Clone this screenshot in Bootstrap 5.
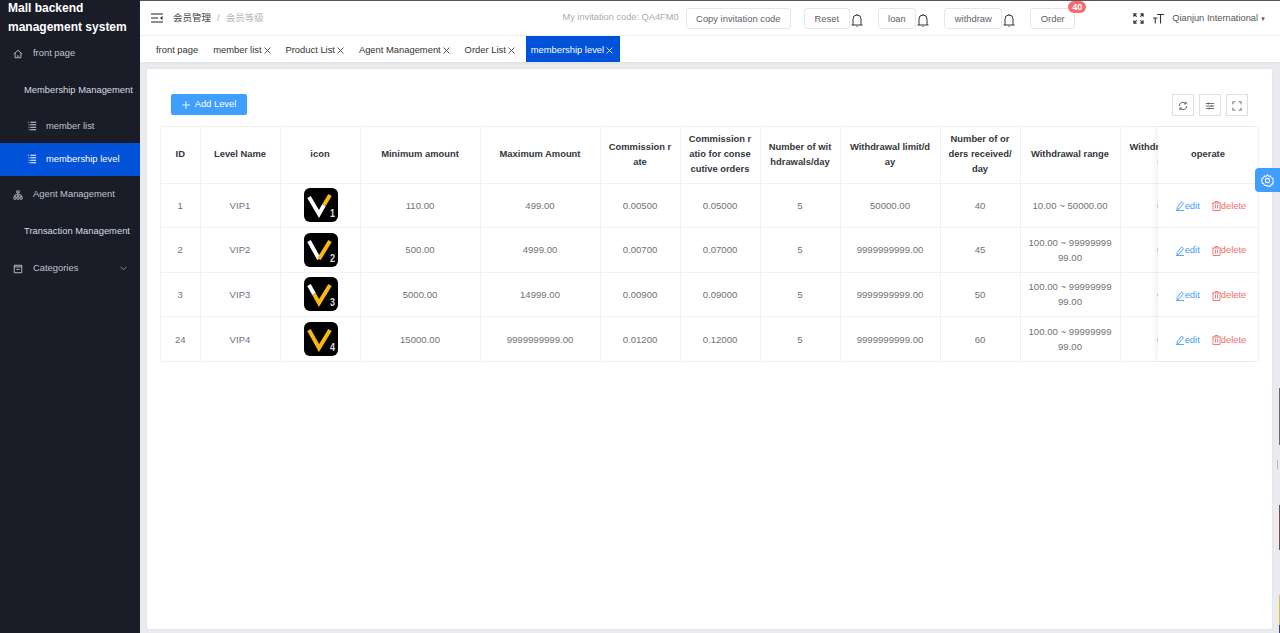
<!DOCTYPE html>
<html lang="en">
<head>
<meta charset="UTF-8">
<title>Mall backend management system</title>
<link href="https://cdn.jsdelivr.net/npm/bootstrap@5.3.0/dist/css/bootstrap.min.css" rel="stylesheet">
<style>
html, body { height: 100%; overflow: hidden; }
body { font-family: "Liberation Sans", "Noto Sans CJK SC", Arial, sans-serif; font-size: 9.4px; color: #606266; background: #e9ebee; }
.shell { height: 633px; }
.side { width: 140px; background: #1a1c28; color: #bfc5ce; flex: none; }
.side-logo { height: 36px; padding: 0 0 0 8px; font-size: 12px; line-height: 19px; font-weight: 700; color: #fff; margin-top: -1px; white-space: nowrap; }
.side-item { height: 37px; padding-left: 13px; gap: 10px; white-space: nowrap; }
.side-item svg { flex: none; }
.side-plain { padding-left: 24px; color: #d5dce4; }
.side-sub { height: 33.5px; padding-left: 27px; gap: 9px; }
.side-active { background: #0052d9; color: #fff; }
.side-chev { margin-left: auto; margin-right: 13px; }
.main-area { min-width: 0; }
.topbar { height: 36px; background: #fff; border-top: 1px solid #555; padding: 0 14px 0 11px; border-bottom: 1px solid #f2f2f2; }
.crumb { margin-left: 10px; font-size: 9.5px; color: #444; }
.crumb i { font-style: normal; color: #aaa; margin: 0 6px; }
.crumb span { color: #b4b4b4; }
.invite { color: #a8abb2; margin-left: auto; margin-right: 7px; font-size: 9.25px; }
.tbtn { height: 21px; padding: 0 9.5px; font-size: 9.4px; line-height: 19px; color: #606266; background: #fff; border: 1px solid #e4e7ed; border-radius: 3px; white-space: nowrap; }
.copy-btn { margin-right: 13px; }
.tbell { margin: 4px 14px 0 0; flex: none; }
.order-wrap { margin-right: 58px; }
.order-badge { position: absolute; top: -7px; right: -11px; background: #f56c6c; color: #fff; border-radius: 7px; font-size: 9px; line-height: 12px; padding: 0 4px; border: 0; }
.size-ico { margin-left: 9px; }
.user-name { font-size: 9.3px; color: #555; margin-left: 8px; margin-top: 1px; white-space: nowrap; }
.caret-mark { font-size: 6px; margin-left: 2px; }
.tabbar { height: 26px; background: #fff; padding-left: 16px; box-shadow: 0 1px 3px rgba(0,0,0,.05); }
.tab-link { font-size: 9.4px; color: #333; white-space: nowrap; height: 26px; line-height: 27px; margin-right: 14.9px; }
.tab-link svg { margin-left: 2px; }
.tab-on { background: #0052d9; color: #fff; padding: 0 7px 0 5px; margin: 0 0 0 -4px; }
.page-body { padding: 7px 8px 4px 7px; height: 571px; }
.sheet { background: #fff; height: 560px; border-radius: 2px; padding: 25px 13px 0 13px; box-shadow: 0 0 3px rgba(0,0,0,.06); }
.tools { height: 32px; padding: 0 11px 0 11px; }
.add-btn { width: 76px; height: 21px; padding: 0; font-size: 9.4px; background: #409eff; color: #fff; border: 0; border-radius: 2px; margin-right: auto; gap: 5px; }
.tool-ico { width: 22px; height: 22px; border: 1px solid #dcdfe6; border-radius: 0; background: #fff; padding: 0; margin-left: 5px; line-height: 18px; }
.grid-wrap { border: 1px solid #eef0f5; width: 1099px; border-radius: 2px; }
.grid-scroll { width: 997px; overflow: hidden; flex: none; }
.grid-fixed { flex: 1; box-shadow: -3px 0 4px rgba(0,0,0,.05); position: relative; }
.lvl-table { table-layout: fixed; margin: 0; border-collapse: collapse; color: #606266; font-size: 9.6px; }
.lvl-table th, .lvl-table td { border: 0; border-right: 1px solid #f0f1f6; border-bottom: 1px solid #f0f1f6; padding: 0 8px; text-align: center; vertical-align: middle; word-break: break-all; line-height: 15px; background: #fff; color: #6f7278; box-shadow: none; }
.lvl-table th { height: 56px; padding: 0 7.5px 2px; color: #33363c; font-weight: 700; font-size: 9.4px; line-height: 15.2px; }
.lvl-table td { height: 44.6px; }
.lvl-table td.ico-cell { padding-left: 10px; }
.lvl-table tr:last-child td { border-bottom: 0; }
.grid-fixed .lvl-table th, .grid-fixed .lvl-table td { border-right: 0; padding: 0; }
.grid-fixed .lvl-table td { padding-left: 6px; }
.grid-fixed .lvl-table th { padding-bottom: 2px; }
.vip-ico { display: block; margin: 0 auto; }
.act-link { font-size: 9.4px; white-space: nowrap; }
.act-edit { color: #409eff; margin-right: 12px; }
.act-del { color: #f56c6c; }
.float-gear { position: absolute; right: 0; top: 168px; width: 25px; height: 24px; background: #409eff; border-radius: 4px 0 0 4px; }
.edge-mark { position: absolute; right: 0; width: 1px; }
.edge-a { top: 388px; height: 57px; background: #6a6a6a; }
.edge-b { top: 505px; height: 45px; background: #7a4a55; }
.edge-c { top: 595px; height: 30px; background: #dcc044; }
.edge-d { top: 625px; height: 8px; background: #3d3f99; }
.edge-dots { position: absolute; right: 2px; top: 460px; width: 1px; height: 9px; background: #b5b5b5; }
</style>
</head>
<body>
<div class="d-flex shell position-relative">
  <!-- sidebar -->
  <aside class="side">
    <div class="side-logo">Mall backend<br>management system</div>
    <div class="side-item d-flex align-items-center">
      <svg width="10" height="10" viewBox="0 0 12 12" fill="none" stroke="#bfc5ce" stroke-width="1.1"><path d="M1 6 6 1.5 11 6M2.5 5v5.5h7V5"/><path d="M4.5 8.5h3"/></svg>
      <span>front page</span>
    </div>
    <div class="side-item side-plain d-flex align-items-center">Membership Management</div>
    <div class="side-item side-sub d-flex align-items-center">
      <svg width="10" height="10" viewBox="0 0 12 12" stroke="#d5dce4" stroke-width="1.2"><path d="M1 1.5h1M4 1.5h7M4 4.5h7M4 7.5h7M4 10.5h7M2 4.5h1M2 7.5h1M2 10.5h1"/></svg>
      <span>member list</span>
    </div>
    <div class="side-item side-sub side-active d-flex align-items-center">
      <svg width="10" height="10" viewBox="0 0 12 12" stroke="#fff" stroke-width="1.2"><path d="M1 1.5h1M4 1.5h7M4 4.5h7M4 7.5h7M4 10.5h7M2 4.5h1M2 7.5h1M2 10.5h1"/></svg>
      <span>membership level</span>
    </div>
    <div class="side-item d-flex align-items-center">
      <svg width="10" height="10" viewBox="0 0 12 12" fill="none" stroke="#bfc5ce" stroke-width="1"><path d="M4.5 1h3v2.5h-3zM1 8h2.5v3H1zM4.75 8h2.5v3h-2.5zM8.5 8H11v3H8.500zM6 3.500V8M2.200 8V5.800h7.600V8"/></svg>
      <span>Agent Management</span>
    </div>
    <div class="side-item side-plain d-flex align-items-center">Transaction Management</div>
    <div class="side-item d-flex align-items-center">
      <svg width="10" height="10" viewBox="0 0 12 12" fill="none" stroke="#bfc5ce" stroke-width="1.1"><path d="M1.500 1.500h9v9h-9zM1.500 3.500h9M4 6.500h4"/></svg>
      <span>Categories</span>
      <svg class="side-chev" width="7" height="5" viewBox="0 0 8 5" fill="none" stroke="#8f95a0" stroke-width="1"><path d="M.5.500 4 4 7.500.500"/></svg>
    </div>
  </aside>

  <div class="main-area flex-grow-1">
    <!-- top bar -->
    <div class="topbar d-flex align-items-center">
      <svg width="12" height="10" viewBox="0 0 12 10" stroke="#222" stroke-width="1.200" fill="#222"><path d="M0 1h12M0 5h7M0 9h12" fill="none"/><path d="M11.500 3v4L9 5z" stroke="none"/></svg>
      <div class="crumb">会员管理<i>/</i><span>会员等级</span></div>
      <div class="invite">My invitation code: QA4FM0</div>
      <button class="btn tbtn copy-btn" type="button">Copy invitation code</button>
      <button class="btn tbtn" type="button">Reset</button>
      <svg class="tbell" width="14" height="14" viewBox="0 0 14 14" fill="none" stroke="#333" stroke-width="1"><path d="M1.500 12h11M3 12V6a4 4 0 0 1 8 0v6M7 1v1M6.500 13.500h1"/></svg>
      <button class="btn tbtn" type="button">loan</button>
      <svg class="tbell" width="14" height="14" viewBox="0 0 14 14" fill="none" stroke="#333" stroke-width="1"><path d="M1.500 12h11M3 12V6a4 4 0 0 1 8 0v6M7 1v1M6.500 13.500h1"/></svg>
      <button class="btn tbtn" type="button">withdraw</button>
      <svg class="tbell" width="14" height="14" viewBox="0 0 14 14" fill="none" stroke="#333" stroke-width="1"><path d="M1.500 12h11M3 12V6a4 4 0 0 1 8 0v6M7 1v1M6.500 13.500h1"/></svg>
      <div class="position-relative order-wrap">
        <button class="btn tbtn" type="button">Order</button>
        <span class="badge order-badge">40</span>
      </div>
      <svg width="11" height="11" viewBox="0 0 12 12" fill="none" stroke="#333" stroke-width="1.300"><path d="M1 1l3 3M1 4V1h3M11 1L8 4M8 1h3v3M1 11l3-3M1 8v3h3M11 11L8 8M8 11h3V8"/></svg>
      <svg class="size-ico" width="11" height="11" viewBox="0 0 11 11" fill="none" stroke="#333" stroke-width="1.100"><path d="M4 1.500h7M7.500 1.500V10.500M0 5h4.500M2.200 5v5.500"/></svg>
      <div class="user-name">Qianjun International<span class="caret-mark">▼</span></div>
    </div>

    <!-- tabs -->
    <div class="tabbar d-flex">
      <span class="tab-link">front page</span>
      <span class="tab-link">member list<svg width="7" height="7" viewBox="0 0 7 7" stroke="#444" stroke-width=".9"><path d="M.5.500l6 6M6.500.500l-6 6"/></svg></span>
      <span class="tab-link">Product List<svg width="7" height="7" viewBox="0 0 7 7" stroke="#444" stroke-width=".9"><path d="M.5.500l6 6M6.500.500l-6 6"/></svg></span>
      <span class="tab-link">Agent Management<svg width="7" height="7" viewBox="0 0 7 7" stroke="#444" stroke-width=".9"><path d="M.5.500l6 6M6.500.500l-6 6"/></svg></span>
      <span class="tab-link">Order List<svg width="7" height="7" viewBox="0 0 7 7" stroke="#444" stroke-width=".9"><path d="M.5.500l6 6M6.500.500l-6 6"/></svg></span>
      <span class="tab-link tab-on">membership level<svg width="7" height="7" viewBox="0 0 7 7" stroke="#dfe8fa" stroke-width=".9"><path d="M.5.500l6 6M6.500.500l-6 6"/></svg></span>
    </div>

    <div class="page-body">
      <div class="sheet">
        <div class="tools d-flex align-items-start">
          <button class="btn add-btn d-flex align-items-center justify-content-center" type="button"><svg width="8" height="8" viewBox="0 0 8 8" stroke="#fff" stroke-width=".9"><path d="M4 0v8M0 4h8"/></svg>Add Level</button>
          <button class="btn tool-ico" type="button"><svg width="10" height="10" viewBox="0 0 12 12" fill="none" stroke="#555" stroke-width="1.100"><path d="M1.500 6a4.500 4.500 0 0 1 8-2.800M10.500 6a4.500 4.500 0 0 1-8 2.800M9.800 1v2.500H7.300M2.200 11V8.500h2.500"/></svg></button>
          <button class="btn tool-ico" type="button"><svg width="10" height="10" viewBox="0 0 12 12" fill="none" stroke="#555" stroke-width="1"><path d="M1 3h10M1 6h10M1 9h10M4 1.800v2.400M8 4.800v2.400M5 7.800v2.400"/></svg></button>
          <button class="btn tool-ico" type="button"><svg width="10" height="10" viewBox="0 0 12 12" fill="none" stroke="#555" stroke-width="1"><path d="M1 4V1h3M8 1h3v3M1 8v3h3M11 8v3H8"/></svg></button>
        </div>

        <div class="grid-wrap d-flex">
          <div class="grid-scroll">
            <table class="table lvl-table" style="width:1039px">
              <colgroup>
                <col style="width:39px"><col style="width:80px"><col style="width:80px"><col style="width:120px"><col style="width:120px"><col style="width:80px"><col style="width:80px"><col style="width:80px"><col style="width:100px"><col style="width:80px"><col style="width:100px"><col style="width:80px">
              </colgroup>
              <thead>
                <tr><th>ID</th><th>Level Name</th><th>icon</th><th>Minimum amount</th><th>Maximum Amount</th><th>Commission rate</th><th>Commission ratio for consecutive orders</th><th>Number of withdrawals/day</th><th>Withdrawal limit/day</th><th>Number of orders received/day</th><th>Withdrawal range</th><th>Withdrawal fee</th></tr>
              </thead>
              <tbody>
                <tr>
                  <td>1</td><td>VIP1</td>
                  <td class="ico-cell"><svg class="vip-ico" width="34" height="34" viewBox="0 0 34 34"><rect width="34" height="34" rx="6" fill="#000"/><g fill="none" stroke-width="4"><path d="M5 9 15 26 20 17" stroke="#fff"/><path d="M20 17 26 7" stroke="#f5b90f"/></g><text x="26" y="29" font-size="11" font-weight="700" fill="#ddd" font-family="Liberation Sans, sans-serif" textLength="5" lengthAdjust="spacingAndGlyphs">1</text></svg></td>
                  <td>110.00</td><td>499.00</td><td>0.00500</td><td>0.05000</td><td>5</td><td>50000.00</td><td>40</td><td>10.00 ~ 50000.00</td><td>0</td>
                </tr>
                <tr>
                  <td>2</td><td>VIP2</td>
                  <td class="ico-cell"><svg class="vip-ico" width="34" height="34" viewBox="0 0 34 34"><rect width="34" height="34" rx="6" fill="#000"/><g fill="none" stroke-width="4"><path d="M5 8 15 26" stroke="#fff"/><path d="M15 26 26 8" stroke="#f5b90f"/></g><text x="26" y="29" font-size="11" font-weight="700" fill="#ddd" font-family="Liberation Sans, sans-serif" textLength="5" lengthAdjust="spacingAndGlyphs">2</text></svg></td>
                  <td>500.00</td><td>4999.00</td><td>0.00700</td><td>0.07000</td><td>5</td><td>9999999999.00</td><td>45</td><td>100.00 ~ 9999999999.00</td><td>0</td>
                </tr>
                <tr>
                  <td>3</td><td>VIP3</td>
                  <td class="ico-cell"><svg class="vip-ico" width="34" height="34" viewBox="0 0 34 34"><rect width="34" height="34" rx="6" fill="#000"/><g fill="none" stroke-width="4"><path d="M5 8 10 17" stroke="#fff"/><path d="M10 17 15 26 26 8" stroke="#f5b90f"/></g><text x="26" y="29" font-size="11" font-weight="700" fill="#ddd" font-family="Liberation Sans, sans-serif" textLength="5" lengthAdjust="spacingAndGlyphs">3</text></svg></td>
                  <td>5000.00</td><td>14999.00</td><td>0.00900</td><td>0.09000</td><td>5</td><td>9999999999.00</td><td>50</td><td>100.00 ~ 9999999999.00</td><td>0</td>
                </tr>
                <tr>
                  <td>24</td><td>VIP4</td>
                  <td class="ico-cell"><svg class="vip-ico" width="34" height="34" viewBox="0 0 34 34"><rect width="34" height="34" rx="6" fill="#000"/><path d="M5 8 15 26 26 8" fill="none" stroke="#f5b90f" stroke-width="4"/><text x="26" y="29" font-size="11" font-weight="700" fill="#ddd" font-family="Liberation Sans, sans-serif" textLength="5" lengthAdjust="spacingAndGlyphs">4</text></svg></td>
                  <td>15000.00</td><td>9999999999.00</td><td>0.01200</td><td>0.12000</td><td>5</td><td>9999999999.00</td><td>60</td><td>100.00 ~ 9999999999.00</td><td>0</td>
                </tr>
              </tbody>
            </table>
          </div>
          <div class="grid-fixed">
            <table class="table lvl-table w-100">
              <thead><tr><th>operate</th></tr></thead>
              <tbody>
                <tr><td><span class="act-link act-edit"><svg width="9" height="10" viewBox="0 0 9 10" fill="none" stroke="#409eff" stroke-width=".9"><path d="M5.500 1 7.500 2.500 3 8 1 8.500 1.200 6.500zM0 9.500h8"/></svg>edit</span><span class="act-link act-del"><svg width="9" height="10" viewBox="0 0 9 10" fill="none" stroke="#f56c6c" stroke-width=".9"><path d="M0 2h9M3 2V.5h3V2M1 2v7.500h7V2M3.500 3.500v4M5.500 3.500v4"/></svg>delete</span></td></tr>
                <tr><td><span class="act-link act-edit"><svg width="9" height="10" viewBox="0 0 9 10" fill="none" stroke="#409eff" stroke-width=".9"><path d="M5.500 1 7.500 2.500 3 8 1 8.500 1.200 6.500zM0 9.500h8"/></svg>edit</span><span class="act-link act-del"><svg width="9" height="10" viewBox="0 0 9 10" fill="none" stroke="#f56c6c" stroke-width=".9"><path d="M0 2h9M3 2V.5h3V2M1 2v7.500h7V2M3.500 3.500v4M5.500 3.500v4"/></svg>delete</span></td></tr>
                <tr><td><span class="act-link act-edit"><svg width="9" height="10" viewBox="0 0 9 10" fill="none" stroke="#409eff" stroke-width=".9"><path d="M5.500 1 7.500 2.500 3 8 1 8.500 1.200 6.500zM0 9.500h8"/></svg>edit</span><span class="act-link act-del"><svg width="9" height="10" viewBox="0 0 9 10" fill="none" stroke="#f56c6c" stroke-width=".9"><path d="M0 2h9M3 2V.5h3V2M1 2v7.500h7V2M3.500 3.500v4M5.500 3.500v4"/></svg>delete</span></td></tr>
                <tr><td><span class="act-link act-edit"><svg width="9" height="10" viewBox="0 0 9 10" fill="none" stroke="#409eff" stroke-width=".9"><path d="M5.500 1 7.500 2.500 3 8 1 8.500 1.200 6.500zM0 9.500h8"/></svg>edit</span><span class="act-link act-del"><svg width="9" height="10" viewBox="0 0 9 10" fill="none" stroke="#f56c6c" stroke-width=".9"><path d="M0 2h9M3 2V.5h3V2M1 2v7.500h7V2M3.500 3.500v4M5.500 3.500v4"/></svg>delete</span></td></tr>
              </tbody>
            </table>
          </div>
        </div>
      </div>
    </div>
  </div>

  <!-- floating settings tab -->
  <div class="float-gear d-flex align-items-center justify-content-center">
    <svg width="13" height="13" viewBox="0 0 14 14" fill="none" stroke="#fff" stroke-width="1.100"><path d="M7 .8 8.300 2.400 10.300 2.100 11 4l1.900.700-.3 2 1.100 1.300-1.100 1.300.3 1.300-1.900.7-.7 1.900-2-.3L7 13.200l-1.300-1.100-2 .3L3 10.500l-1.900-.7.300-1.300L.3 7l1.100-1.300-.3-1L3 4l.7-1.900 2 .3z"/><circle cx="7" cy="7" r="2.300"/></svg>
  </div>
  <div class="edge-mark edge-a"></div>
  <div class="edge-mark edge-b"></div>
  <div class="edge-mark edge-c"></div>
  <div class="edge-mark edge-d"></div>
  <div class="edge-dots"></div>
</div>
</body>
</html>
